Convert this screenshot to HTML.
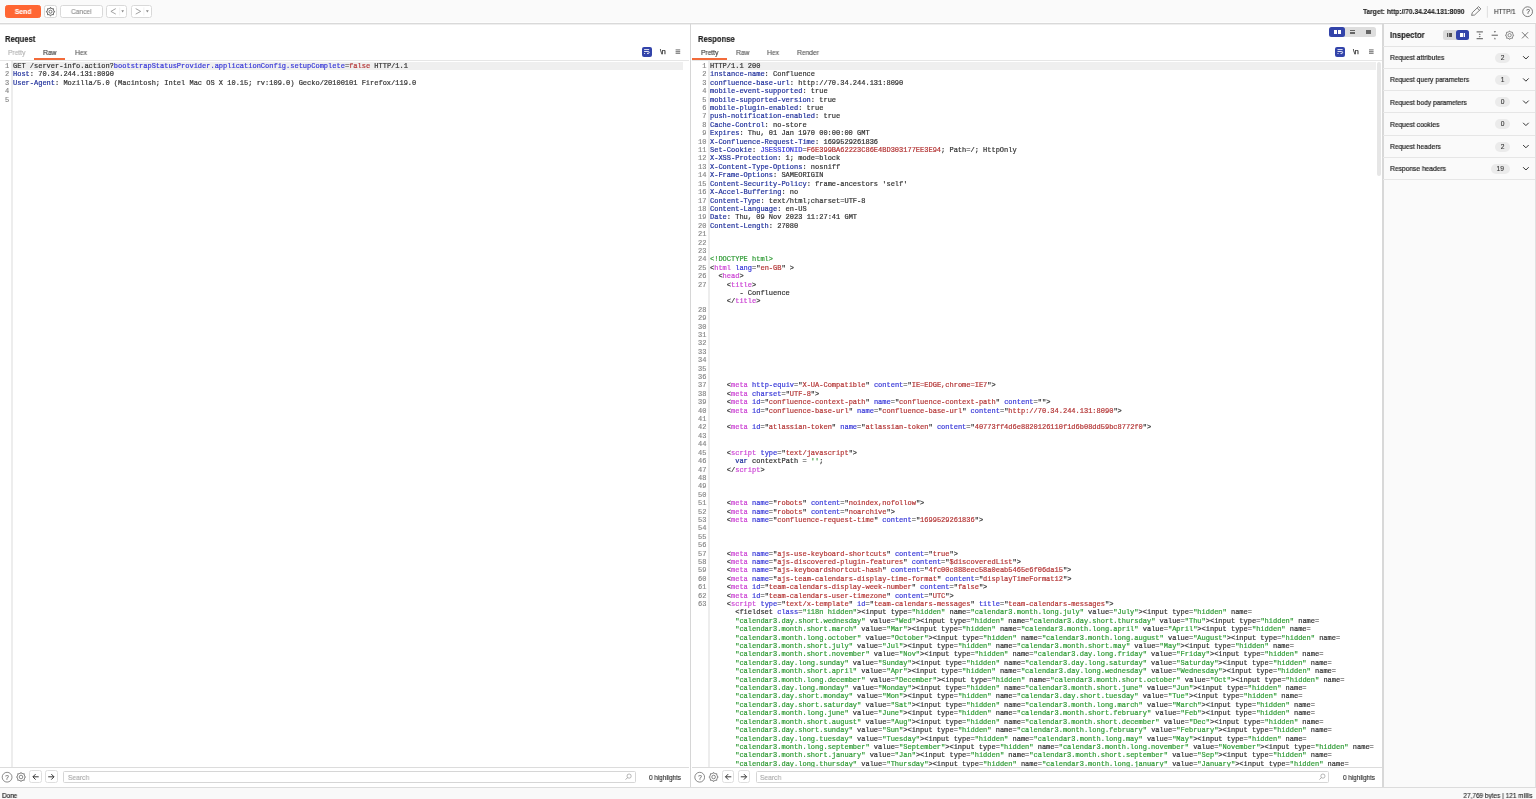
<!DOCTYPE html>
<html><head><meta charset="utf-8">
<style>
*{box-sizing:border-box;margin:0;padding:0}
html,body{width:1536px;height:799px;overflow:hidden;background:#fff;-webkit-font-smoothing:antialiased;font-family:"Liberation Sans",sans-serif;color:#222;position:relative}
.abs{position:absolute}
svg{position:absolute;overflow:visible}
.btn{position:absolute;border:1px solid #d9d9d9;border-radius:2.5px;background:#fff}
.ui{will-change:transform;transform:scaleX(0.935);transform-origin:0 0;-webkit-text-stroke:0.12px currentColor;font-size:7.15px;white-space:nowrap;position:absolute;line-height:9px}
.ttl{will-change:transform;transform:scaleX(0.855);transform-origin:0 0;-webkit-text-stroke:0.15px currentColor;font-size:9px;font-weight:bold;line-height:10px;position:absolute;white-space:nowrap}
.code{will-change:transform;font-family:"Liberation Mono",monospace;font-size:7px;line-height:8.41px;white-space:pre;position:absolute;-webkit-text-stroke:0.2px currentColor;color:#333}
.nums{will-change:transform;font-family:"Liberation Mono",monospace;font-size:7px;line-height:8.41px;white-space:pre;position:absolute;text-align:right;color:#858585;-webkit-text-stroke:0.15px currentColor}
.h{color:#21319c}.a{color:#3838d8}.t{color:#cc44d4}.v{color:#b43636}.g{color:#2f9a35}
.vline{position:absolute;width:1px;background:#e3e3e3}
.hline{position:absolute;height:1px;background:#dedede}
.ii{position:absolute;left:1383px;width:152px;height:22.2px;border-bottom:1px solid #e6e6e6}
.ii .lb{will-change:transform;transform:scaleX(0.935);transform-origin:0 0;-webkit-text-stroke:0.2px currentColor;position:absolute;left:6.5px;top:7.4px;font-size:7.15px;line-height:9px;white-space:nowrap;color:#222}
.ii .bd{will-change:transform;position:absolute;right:25.3px;top:6px;height:9.5px;min-width:15.2px;padding:0 2.5px;-webkit-text-stroke:0.1px currentColor;border-radius:5px;background:#ebebeb;font-size:6.7px;line-height:10.6px;text-align:center;color:#333}
</style></head><body>
<div class="abs" style="left:0;top:0;width:1536px;height:23px;background:#fafafa"></div><div class="abs" style="left:0;top:22px;width:1536px;height:1px;background:#fdfdfd"></div><div class="abs" style="left:0;top:23px;width:1536px;height:1px;background:#d9d9d9"></div><div class="abs" style="left:0;top:24px;width:1536px;height:1px;background:#efefef"></div>
<div class="btn" style="left:5px;top:5.45px;width:36.2px;height:12.6px;background:#ff6633;border-color:#ff6633"></div>
<div class="ui" style="left:5px;top:7.95px;width:36.2px;text-align:center;color:#fff;font-weight:bold;transform-origin:50% 0">Send</div>
<div class="btn" style="left:44.3px;top:5.1px;width:12.5px;height:13.4px"></div>
<svg style="left:0;top:0" width="1" height="1"><circle cx="50.5" cy="11.7" r="3.60" fill="none" stroke="#707070" stroke-width="1.0"/><circle cx="50.50" cy="7.65" r="0.62" fill="#707070"/><circle cx="53.36" cy="8.84" r="0.62" fill="#707070"/><circle cx="54.55" cy="11.70" r="0.62" fill="#707070"/><circle cx="53.36" cy="14.56" r="0.62" fill="#707070"/><circle cx="50.50" cy="15.75" r="0.62" fill="#707070"/><circle cx="47.64" cy="14.56" r="0.62" fill="#707070"/><circle cx="46.45" cy="11.70" r="0.62" fill="#707070"/><circle cx="47.64" cy="8.84" r="0.62" fill="#707070"/><circle cx="50.5" cy="11.7" r="1.53" fill="none" stroke="#707070" stroke-width="1.0"/></svg>
<div class="btn" style="left:60.3px;top:5.1px;width:42.6px;height:13.4px"></div>
<div class="ui" style="left:60.3px;top:7.95px;width:42.6px;text-align:center;color:#8a8a8a;transform-origin:50% 0">Cancel</div>
<div class="btn" style="left:106.2px;top:5.1px;width:21.3px;height:13.4px"></div>
<div class="btn" style="left:131.4px;top:5.1px;width:21.1px;height:13.4px"></div>
<svg style="left:0;top:0" width="1" height="1">
 <path d="M115.8 8.6 L110.9 11.4 L115.8 14.1" fill="none" stroke="#8a8a8a" stroke-width="0.8"/>
 <path d="M119.7 7.5 V15.5" stroke="#e6e6e6" stroke-width="0.6"/>
 <path d="M121.3 10.3 H124 L122.65 12.5 Z" fill="#8a8a8a"/>
 <path d="M135.7 8.6 L140.7 11.4 L135.7 14.1" fill="none" stroke="#8a8a8a" stroke-width="0.8"/>
 <path d="M143.9 7.5 V15.5" stroke="#e6e6e6" stroke-width="0.6"/>
 <path d="M145.9 10.3 H148.8 L147.35 12.5 Z" fill="#8a8a8a"/>
 <!-- pencil -->
 <path d="M471.6 15.4 L472.3 12.6 L478.6 6.6 L480.9 8.9 L474.6 15 Z M477.2 8 L479.5 10.3" transform="translate(1000,0)" fill="none" stroke="#555" stroke-width="0.75" stroke-linejoin="round"/>
 <path d="M1487.4 6 V17.7" stroke="#d8d8d8" stroke-width="0.8"/>
 <circle cx="1527.6" cy="11.7" r="4.9" fill="none" stroke="#555" stroke-width="0.75"/>
</svg>
<div class="ui" style="left:1527.6px;top:0;width:0"><div style="position:absolute;left:-3px;top:7.2px;width:6px;text-align:center;font-size:6.6px;line-height:9px;color:#444">?</div></div>
<div class="ui" style="left:1363px;top:7.95px;font-weight:bold;transform:scaleX(0.927)">Target: http://70.34.244.131:8090</div>
<div class="ui" style="left:1493.8px;top:7.95px;color:#333;transform:scaleX(0.874)">HTTP/1</div>

<!-- request panel -->
<div class="ttl" style="left:5px;top:33.6px">Request</div>
<div class="ui" style="left:7.8px;top:49.14px;color:#b0b0b0">Pretty</div>
<div class="ui" style="left:43.2px;top:49.14px;color:#333">Raw</div>
<div class="ui" style="left:74.5px;top:49.14px;color:#555">Hex</div>
<div class="abs" style="left:34.2px;top:58.3px;width:31.2px;height:1.7px;background:#f26b3a"></div>
<div class="abs" style="left:641.9px;top:47px;width:9.9px;height:9.7px;border-radius:2px;background:#3344aa"></div><svg style="left:0;top:0" width="1" height="1"><path d="M644.10 49.55 H649.20 M644.10 51.5 H648.30 A0.95 0.95 0 0 1 648.30 53.4 H647.80 M644.10 53.5 H645.10" fill="none" stroke="#fff" stroke-width="0.85"/><path d="M646.80 53.4 L648.10 52.5 L648.10 54.3 Z" fill="#fff"/><path d="M675.60 49.75 H680.20 M675.60 51.5 H680.20 M675.60 53.25 H680.20" stroke="#8a8a8a" stroke-width="1.25"/></svg><div class="ui" style="left:660.00px;top:47.4px;font-size:7.2px;color:#333;-webkit-text-stroke:0.25px currentColor;letter-spacing:-0.2px;transform:none">\n</div>
<div class="hline" style="left:0;top:59.8px;width:689px;background:#e6e6e6"></div>
<div class="abs" style="left:12px;top:61.7px;width:670.5px;height:8px;background:#efefef"></div>
<div class="nums" style="left:0;top:62.4px;width:9.3px"><div>1</div><div>2</div><div>3</div><div>4</div><div>5</div></div>
<div class="vline" style="left:10.5px;top:60.5px;height:706.5px;width:2px;background:#ededed"></div>
<div class="code" style="left:13.2px;top:62.4px"><div class=hl>GET /server-info.action?<span class="a">bootstrapStatusProvider.applicationConfig.setupComplete</span>=<span class="v">false</span> HTTP/1.1</div><div><span class="h">Host</span>: 70.34.244.131:8090</div><div><span class="h">User-Agent</span>: Mozilla/5.0 (Macintosh; Intel Mac OS X 10.15; rv:109.0) Gecko/20100101 Firefox/119.0</div><div>&nbsp;</div><div>&nbsp;</div></div>
<div class="hline" style="left:0;top:767px;width:689px;background:#dcdcdc"></div>
<svg style="left:0;top:0" width="1" height="1"><circle cx="7.10" cy="777.2" r="4.9" fill="none" stroke="#666" stroke-width="0.75"/></svg><div class="ui" style="left:4.10px;top:772.6px;width:6px;text-align:center;font-size:6.4px;color:#666">?</div><svg style="left:0;top:0" width="1" height="1"><circle cx="21.0" cy="777.0" r="4.00" fill="none" stroke="#666" stroke-width="0.75"/><circle cx="21.00" cy="772.50" r="0.46" fill="#666"/><circle cx="24.18" cy="773.82" r="0.46" fill="#666"/><circle cx="25.50" cy="777.00" r="0.46" fill="#666"/><circle cx="24.18" cy="780.18" r="0.46" fill="#666"/><circle cx="21.00" cy="781.50" r="0.46" fill="#666"/><circle cx="17.82" cy="780.18" r="0.46" fill="#666"/><circle cx="16.50" cy="777.00" r="0.46" fill="#666"/><circle cx="17.82" cy="773.82" r="0.46" fill="#666"/><circle cx="21.0" cy="777.0" r="1.80" fill="none" stroke="#666" stroke-width="0.75"/></svg><div class="btn" style="left:29.40px;top:770.3px;width:12.3px;height:12.8px;border-color:#dfdfdf"></div><div class="btn" style="left:45.10px;top:770.3px;width:12.6px;height:12.8px;border-color:#dfdfdf"></div><svg style="left:0;top:0" width="1" height="1"><path d="M38.70 776.8 H33.00 M35.60 774.1 L32.90 776.8 L35.60 779.6" fill="none" stroke="#222" stroke-width="0.9"/><path d="M48.20 776.8 H53.90 M51.30 774.1 L54.00 776.8 L51.30 779.6" fill="none" stroke="#222" stroke-width="0.9"/></svg><div class="btn" style="left:63.30px;top:771px;width:572.40px;height:12px;border-color:#d6d6d6;border-radius:1.5px"></div><div class="ui" style="left:67.70px;top:773.55px;color:#a8a8a8">Search</div><svg style="left:0;top:0" width="1" height="1"><circle cx="629.10" cy="776.1" r="2.1" fill="none" stroke="#888" stroke-width="0.6"/><path d="M627.60 777.6 L625.60 779.6" stroke="#888" stroke-width="0.7"/></svg><div class="ui" style="left:648.80px;top:773.55px;color:#222;transform:scaleX(0.884)">0 highlights</div>

<!-- divider -->
<div class="vline" style="left:690px;top:24px;height:763px;width:1.2px;background:#d6d6d6"></div>

<!-- response panel -->
<div class="abs" style="left:1329.2px;top:27.2px;width:46.7px;height:9.6px;border-radius:2.5px;background:#dedede"></div>
<div class="abs" style="left:1329.2px;top:27.2px;width:15.6px;height:9.6px;border-radius:2.5px;background:#3344aa"></div>
<div class="abs" style="left:1333.7px;top:29.9px;width:3.2px;height:4px;background:#fff"></div>
<div class="abs" style="left:1337.6px;top:29.9px;width:3.1px;height:4px;background:#fff"></div>
<div class="abs" style="left:1350.2px;top:29.9px;width:5px;height:1.5px;background:#666"></div>
<div class="abs" style="left:1350.2px;top:32.4px;width:5px;height:1.5px;background:#666"></div>
<div class="abs" style="left:1366px;top:29.9px;width:4.9px;height:4px;background:#666"></div>
<div class="ttl" style="left:697.9px;top:33.6px">Response</div>
<div class="ui" style="left:700.6px;top:49.14px;color:#333">Pretty</div>
<div class="ui" style="left:735.8px;top:49.14px;color:#555">Raw</div>
<div class="ui" style="left:767.1px;top:49.14px;color:#555">Hex</div>
<div class="ui" style="left:797.1px;top:49.14px;color:#555">Render</div>
<div class="abs" style="left:691.9px;top:58.3px;width:35.1px;height:1.7px;background:#f26b3a"></div>
<div class="abs" style="left:1335.3px;top:47px;width:9.9px;height:9.7px;border-radius:2px;background:#3344aa"></div><svg style="left:0;top:0" width="1" height="1"><path d="M1337.50 49.55 H1342.60 M1337.50 51.5 H1341.70 A0.95 0.95 0 0 1 1341.70 53.4 H1341.20 M1337.50 53.5 H1338.50" fill="none" stroke="#fff" stroke-width="0.85"/><path d="M1340.20 53.4 L1341.50 52.5 L1341.50 54.3 Z" fill="#fff"/><path d="M1369.00 49.75 H1373.60 M1369.00 51.5 H1373.60 M1369.00 53.25 H1373.60" stroke="#8a8a8a" stroke-width="1.25"/></svg><div class="ui" style="left:1353.40px;top:47.4px;font-size:7.2px;color:#333;-webkit-text-stroke:0.25px currentColor;letter-spacing:-0.2px;transform:none">\n</div>
<div class="hline" style="left:691.5px;top:59.8px;width:691px;background:#e6e6e6"></div>
<div class="abs" style="left:709px;top:61.7px;width:666.7px;height:8px;background:#efefef"></div>
<div class="nums" style="left:692px;top:62.4px;width:14.4px"><div>1</div><div>2</div><div>3</div><div>4</div><div>5</div><div>6</div><div>7</div><div>8</div><div>9</div><div>10</div><div>11</div><div>12</div><div>13</div><div>14</div><div>15</div><div>16</div><div>17</div><div>18</div><div>19</div><div>20</div><div>21</div><div>22</div><div>23</div><div>24</div><div>25</div><div>26</div><div>27</div><div>&nbsp;</div><div>&nbsp;</div><div>28</div><div>29</div><div>30</div><div>31</div><div>32</div><div>33</div><div>34</div><div>35</div><div>36</div><div>37</div><div>38</div><div>39</div><div>40</div><div>41</div><div>42</div><div>43</div><div>44</div><div>45</div><div>46</div><div>47</div><div>48</div><div>49</div><div>50</div><div>51</div><div>52</div><div>53</div><div>54</div><div>55</div><div>56</div><div>57</div><div>58</div><div>59</div><div>60</div><div>61</div><div>62</div><div>63</div><div>&nbsp;</div><div>&nbsp;</div><div>&nbsp;</div><div>&nbsp;</div><div>&nbsp;</div><div>&nbsp;</div><div>&nbsp;</div><div>&nbsp;</div><div>&nbsp;</div><div>&nbsp;</div><div>&nbsp;</div><div>&nbsp;</div><div>&nbsp;</div><div>&nbsp;</div><div>&nbsp;</div><div>&nbsp;</div><div>&nbsp;</div><div>&nbsp;</div><div>&nbsp;</div></div>
<div class="vline" style="left:707.5px;top:60.5px;height:706.5px;width:2px;background:#ededed"></div>
<div class="code" style="left:710.4px;top:62.4px"><div class=hl>HTTP/1.1 200</div><div><span class="h">instance-name</span>: Confluence</div><div><span class="h">confluence-base-url</span>: http://70.34.244.131:8090</div><div><span class="h">mobile-event-supported</span>: true</div><div><span class="h">mobile-supported-version</span>: true</div><div><span class="h">mobile-plugin-enabled</span>: true</div><div><span class="h">push-notification-enabled</span>: true</div><div><span class="h">Cache-Control</span>: no-store</div><div><span class="h">Expires</span>: Thu, 01 Jan 1970 00:00:00 GMT</div><div><span class="h">X-Confluence-Request-Time</span>: 1699529261836</div><div><span class="h">Set-Cookie</span>: <span class="a">JSESSIONID</span>=<span class="v">F6E399BA62223C86E4BD303177EE3E94</span>; Path=/; HttpOnly</div><div><span class="h">X-XSS-Protection</span>: 1; mode=block</div><div><span class="h">X-Content-Type-Options</span>: nosniff</div><div><span class="h">X-Frame-Options</span>: SAMEORIGIN</div><div><span class="h">Content-Security-Policy</span>: frame-ancestors &#x27;self&#x27;</div><div><span class="h">X-Accel-Buffering</span>: no</div><div><span class="h">Content-Type</span>: text/html;charset=UTF-8</div><div><span class="h">Content-Language</span>: en-US</div><div><span class="h">Date</span>: Thu, 09 Nov 2023 11:27:41 GMT</div><div><span class="h">Content-Length</span>: 27080</div><div>&nbsp;</div><div>&nbsp;</div><div>&nbsp;</div><div><span class="g">&lt;!DOCTYPE html&gt;</span></div><div>&lt;<span class="t">html</span> <span class="a">lang</span>=&quot;<span class="v">en-GB</span>&quot; &gt;</div><div>  &lt;<span class="t">head</span>&gt;</div><div>    &lt;<span class="t">title</span>&gt;</div><div>       - Confluence</div><div>    &lt;/<span class="t">title</span>&gt;</div><div>&nbsp;</div><div>&nbsp;</div><div>&nbsp;</div><div>&nbsp;</div><div>&nbsp;</div><div>&nbsp;</div><div>&nbsp;</div><div>&nbsp;</div><div>&nbsp;</div><div>    &lt;<span class="t">meta</span> <span class="a">http-equiv</span>=&quot;<span class="v">X-UA-Compatible</span>&quot; <span class="a">content</span>=&quot;<span class="v">IE=EDGE,chrome=IE7</span>&quot;&gt;</div><div>    &lt;<span class="t">meta</span> <span class="a">charset</span>=&quot;<span class="v">UTF-8</span>&quot;&gt;</div><div>    &lt;<span class="t">meta</span> <span class="a">id</span>=&quot;<span class="v">confluence-context-path</span>&quot; <span class="a">name</span>=&quot;<span class="v">confluence-context-path</span>&quot; <span class="a">content</span>=&quot;<span class="v"></span>&quot;&gt;</div><div>    &lt;<span class="t">meta</span> <span class="a">id</span>=&quot;<span class="v">confluence-base-url</span>&quot; <span class="a">name</span>=&quot;<span class="v">confluence-base-url</span>&quot; <span class="a">content</span>=&quot;<span class="v">http://70.34.244.131:8090</span>&quot;&gt;</div><div>&nbsp;</div><div>    &lt;<span class="t">meta</span> <span class="a">id</span>=&quot;<span class="v">atlassian-token</span>&quot; <span class="a">name</span>=&quot;<span class="v">atlassian-token</span>&quot; <span class="a">content</span>=&quot;<span class="v">40773ff4d6e8820126110f1d6b08dd59bc8772f0</span>&quot;&gt;</div><div>&nbsp;</div><div>&nbsp;</div><div>    &lt;<span class="t">script</span> <span class="a">type</span>=&quot;<span class="v">text/javascript</span>&quot;&gt;</div><div>      <span class="h">var</span> contextPath = <span class="g">&#x27;&#x27;</span>;</div><div>    &lt;/<span class="t">script</span>&gt;</div><div>&nbsp;</div><div>&nbsp;</div><div>&nbsp;</div><div>    &lt;<span class="t">meta</span> <span class="a">name</span>=&quot;<span class="v">robots</span>&quot; <span class="a">content</span>=&quot;<span class="v">noindex,nofollow</span>&quot;&gt;</div><div>    &lt;<span class="t">meta</span> <span class="a">name</span>=&quot;<span class="v">robots</span>&quot; <span class="a">content</span>=&quot;<span class="v">noarchive</span>&quot;&gt;</div><div>    &lt;<span class="t">meta</span> <span class="a">name</span>=&quot;<span class="v">confluence-request-time</span>&quot; <span class="a">content</span>=&quot;<span class="v">1699529261836</span>&quot;&gt;</div><div>&nbsp;</div><div>&nbsp;</div><div>&nbsp;</div><div>    &lt;<span class="t">meta</span> <span class="a">name</span>=&quot;<span class="v">ajs-use-keyboard-shortcuts</span>&quot; <span class="a">content</span>=&quot;<span class="v">true</span>&quot;&gt;</div><div>    &lt;<span class="t">meta</span> <span class="a">name</span>=&quot;<span class="v">ajs-discovered-plugin-features</span>&quot; <span class="a">content</span>=&quot;<span class="v">$discoveredList</span>&quot;&gt;</div><div>    &lt;<span class="t">meta</span> <span class="a">name</span>=&quot;<span class="v">ajs-keyboardshortcut-hash</span>&quot; <span class="a">content</span>=&quot;<span class="v">4fc00c888eec58a0eab5465e6f06da15</span>&quot;&gt;</div><div>    &lt;<span class="t">meta</span> <span class="a">name</span>=&quot;<span class="v">ajs-team-calendars-display-time-format</span>&quot; <span class="a">content</span>=&quot;<span class="v">displayTimeFormat12</span>&quot;&gt;</div><div>    &lt;<span class="t">meta</span> <span class="a">id</span>=&quot;<span class="v">team-calendars-display-week-number</span>&quot; <span class="a">content</span>=&quot;<span class="v">false</span>&quot;&gt;</div><div>    &lt;<span class="t">meta</span> <span class="a">id</span>=&quot;<span class="v">team-calendars-user-timezone</span>&quot; <span class="a">content</span>=&quot;<span class="v">UTC</span>&quot;&gt;</div><div>    &lt;<span class="t">script</span> <span class="a">type</span>=&quot;<span class="v">text/x-template</span>&quot; <span class="a">id</span>=&quot;<span class="v">team-calendars-messages</span>&quot; <span class="a">title</span>=&quot;<span class="v">team-calendars-messages</span>&quot;&gt;</div><div>      &lt;fieldset <span class="a">class</span>=<span class="g">&quot;i18n hidden&quot;</span>&gt;&lt;input type=<span class="g">&quot;hidden&quot;</span> name=<span class="g">&quot;calendar3.month.long.july&quot;</span> value=<span class="g">&quot;July&quot;</span>&gt;&lt;input type=<span class="g">&quot;hidden&quot;</span> name=</div><div>      <span class="g">&quot;calendar3.day.short.wednesday&quot;</span> value=<span class="g">&quot;Wed&quot;</span>&gt;&lt;input type=<span class="g">&quot;hidden&quot;</span> name=<span class="g">&quot;calendar3.day.short.thursday&quot;</span> value=<span class="g">&quot;Thu&quot;</span>&gt;&lt;input type=<span class="g">&quot;hidden&quot;</span> name=</div><div>      <span class="g">&quot;calendar3.month.short.march&quot;</span> value=<span class="g">&quot;Mar&quot;</span>&gt;&lt;input type=<span class="g">&quot;hidden&quot;</span> name=<span class="g">&quot;calendar3.month.long.april&quot;</span> value=<span class="g">&quot;April&quot;</span>&gt;&lt;input type=<span class="g">&quot;hidden&quot;</span> name=</div><div>      <span class="g">&quot;calendar3.month.long.october&quot;</span> value=<span class="g">&quot;October&quot;</span>&gt;&lt;input type=<span class="g">&quot;hidden&quot;</span> name=<span class="g">&quot;calendar3.month.long.august&quot;</span> value=<span class="g">&quot;August&quot;</span>&gt;&lt;input type=<span class="g">&quot;hidden&quot;</span> name=</div><div>      <span class="g">&quot;calendar3.month.short.july&quot;</span> value=<span class="g">&quot;Jul&quot;</span>&gt;&lt;input type=<span class="g">&quot;hidden&quot;</span> name=<span class="g">&quot;calendar3.month.short.may&quot;</span> value=<span class="g">&quot;May&quot;</span>&gt;&lt;input type=<span class="g">&quot;hidden&quot;</span> name=</div><div>      <span class="g">&quot;calendar3.month.short.november&quot;</span> value=<span class="g">&quot;Nov&quot;</span>&gt;&lt;input type=<span class="g">&quot;hidden&quot;</span> name=<span class="g">&quot;calendar3.day.long.friday&quot;</span> value=<span class="g">&quot;Friday&quot;</span>&gt;&lt;input type=<span class="g">&quot;hidden&quot;</span> name=</div><div>      <span class="g">&quot;calendar3.day.long.sunday&quot;</span> value=<span class="g">&quot;Sunday&quot;</span>&gt;&lt;input type=<span class="g">&quot;hidden&quot;</span> name=<span class="g">&quot;calendar3.day.long.saturday&quot;</span> value=<span class="g">&quot;Saturday&quot;</span>&gt;&lt;input type=<span class="g">&quot;hidden&quot;</span> name=</div><div>      <span class="g">&quot;calendar3.month.short.april&quot;</span> value=<span class="g">&quot;Apr&quot;</span>&gt;&lt;input type=<span class="g">&quot;hidden&quot;</span> name=<span class="g">&quot;calendar3.day.long.wednesday&quot;</span> value=<span class="g">&quot;Wednesday&quot;</span>&gt;&lt;input type=<span class="g">&quot;hidden&quot;</span> name=</div><div>      <span class="g">&quot;calendar3.month.long.december&quot;</span> value=<span class="g">&quot;December&quot;</span>&gt;&lt;input type=<span class="g">&quot;hidden&quot;</span> name=<span class="g">&quot;calendar3.month.short.october&quot;</span> value=<span class="g">&quot;Oct&quot;</span>&gt;&lt;input type=<span class="g">&quot;hidden&quot;</span> name=</div><div>      <span class="g">&quot;calendar3.day.long.monday&quot;</span> value=<span class="g">&quot;Monday&quot;</span>&gt;&lt;input type=<span class="g">&quot;hidden&quot;</span> name=<span class="g">&quot;calendar3.month.short.june&quot;</span> value=<span class="g">&quot;Jun&quot;</span>&gt;&lt;input type=<span class="g">&quot;hidden&quot;</span> name=</div><div>      <span class="g">&quot;calendar3.day.short.monday&quot;</span> value=<span class="g">&quot;Mon&quot;</span>&gt;&lt;input type=<span class="g">&quot;hidden&quot;</span> name=<span class="g">&quot;calendar3.day.short.tuesday&quot;</span> value=<span class="g">&quot;Tue&quot;</span>&gt;&lt;input type=<span class="g">&quot;hidden&quot;</span> name=</div><div>      <span class="g">&quot;calendar3.day.short.saturday&quot;</span> value=<span class="g">&quot;Sat&quot;</span>&gt;&lt;input type=<span class="g">&quot;hidden&quot;</span> name=<span class="g">&quot;calendar3.month.long.march&quot;</span> value=<span class="g">&quot;March&quot;</span>&gt;&lt;input type=<span class="g">&quot;hidden&quot;</span> name=</div><div>      <span class="g">&quot;calendar3.month.long.june&quot;</span> value=<span class="g">&quot;June&quot;</span>&gt;&lt;input type=<span class="g">&quot;hidden&quot;</span> name=<span class="g">&quot;calendar3.month.short.february&quot;</span> value=<span class="g">&quot;Feb&quot;</span>&gt;&lt;input type=<span class="g">&quot;hidden&quot;</span> name=</div><div>      <span class="g">&quot;calendar3.month.short.august&quot;</span> value=<span class="g">&quot;Aug&quot;</span>&gt;&lt;input type=<span class="g">&quot;hidden&quot;</span> name=<span class="g">&quot;calendar3.month.short.december&quot;</span> value=<span class="g">&quot;Dec&quot;</span>&gt;&lt;input type=<span class="g">&quot;hidden&quot;</span> name=</div><div>      <span class="g">&quot;calendar3.day.short.sunday&quot;</span> value=<span class="g">&quot;Sun&quot;</span>&gt;&lt;input type=<span class="g">&quot;hidden&quot;</span> name=<span class="g">&quot;calendar3.month.long.february&quot;</span> value=<span class="g">&quot;February&quot;</span>&gt;&lt;input type=<span class="g">&quot;hidden&quot;</span> name=</div><div>      <span class="g">&quot;calendar3.day.long.tuesday&quot;</span> value=<span class="g">&quot;Tuesday&quot;</span>&gt;&lt;input type=<span class="g">&quot;hidden&quot;</span> name=<span class="g">&quot;calendar3.month.long.may&quot;</span> value=<span class="g">&quot;May&quot;</span>&gt;&lt;input type=<span class="g">&quot;hidden&quot;</span> name=</div><div>      <span class="g">&quot;calendar3.month.long.september&quot;</span> value=<span class="g">&quot;September&quot;</span>&gt;&lt;input type=<span class="g">&quot;hidden&quot;</span> name=<span class="g">&quot;calendar3.month.long.november&quot;</span> value=<span class="g">&quot;November&quot;</span>&gt;&lt;input type=<span class="g">&quot;hidden&quot;</span> name=</div><div>      <span class="g">&quot;calendar3.month.short.january&quot;</span> value=<span class="g">&quot;Jan&quot;</span>&gt;&lt;input type=<span class="g">&quot;hidden&quot;</span> name=<span class="g">&quot;calendar3.month.short.september&quot;</span> value=<span class="g">&quot;Sep&quot;</span>&gt;&lt;input type=<span class="g">&quot;hidden&quot;</span> name=</div><div>      <span class="g">&quot;calendar3.day.long.thursday&quot;</span> value=<span class="g">&quot;Thursday&quot;</span>&gt;&lt;input type=<span class="g">&quot;hidden&quot;</span> name=<span class="g">&quot;calendar3.month.long.january&quot;</span> value=<span class="g">&quot;January&quot;</span>&gt;&lt;input type=<span class="g">&quot;hidden&quot;</span> name=</div></div>
<div class="abs" style="left:1377.2px;top:61.7px;width:3.5px;height:114px;border-radius:2px;background:#e6e6e6"></div>
<div class="hline" style="left:691.5px;top:767px;width:691px;background:#dcdcdc"></div>
<svg style="left:0;top:0" width="1" height="1"><circle cx="699.70" cy="777.2" r="4.9" fill="none" stroke="#666" stroke-width="0.75"/></svg><div class="ui" style="left:696.70px;top:772.6px;width:6px;text-align:center;font-size:6.4px;color:#666">?</div><svg style="left:0;top:0" width="1" height="1"><circle cx="713.6" cy="777.0" r="4.00" fill="none" stroke="#666" stroke-width="0.75"/><circle cx="713.60" cy="772.50" r="0.46" fill="#666"/><circle cx="716.78" cy="773.82" r="0.46" fill="#666"/><circle cx="718.10" cy="777.00" r="0.46" fill="#666"/><circle cx="716.78" cy="780.18" r="0.46" fill="#666"/><circle cx="713.60" cy="781.50" r="0.46" fill="#666"/><circle cx="710.42" cy="780.18" r="0.46" fill="#666"/><circle cx="709.10" cy="777.00" r="0.46" fill="#666"/><circle cx="710.42" cy="773.82" r="0.46" fill="#666"/><circle cx="713.6" cy="777.0" r="1.80" fill="none" stroke="#666" stroke-width="0.75"/></svg><div class="btn" style="left:722.00px;top:770.3px;width:12.3px;height:12.8px;border-color:#dfdfdf"></div><div class="btn" style="left:737.70px;top:770.3px;width:12.6px;height:12.8px;border-color:#dfdfdf"></div><svg style="left:0;top:0" width="1" height="1"><path d="M731.30 776.8 H725.60 M728.20 774.1 L725.50 776.8 L728.20 779.6" fill="none" stroke="#222" stroke-width="0.9"/><path d="M740.80 776.8 H746.50 M743.90 774.1 L746.60 776.8 L743.90 779.6" fill="none" stroke="#222" stroke-width="0.9"/></svg><div class="btn" style="left:755.90px;top:771px;width:573.60px;height:12px;border-color:#d6d6d6;border-radius:1.5px"></div><div class="ui" style="left:760.30px;top:773.55px;color:#a8a8a8">Search</div><svg style="left:0;top:0" width="1" height="1"><circle cx="1322.90" cy="776.1" r="2.1" fill="none" stroke="#888" stroke-width="0.6"/><path d="M1321.40 777.6 L1319.40 779.6" stroke="#888" stroke-width="0.7"/></svg><div class="ui" style="left:1342.60px;top:773.55px;color:#222;transform:scaleX(0.884)">0 highlights</div>

<!-- inspector -->
<div class="abs" style="left:1382px;top:24px;width:154px;height:763px;background:#fafafa;border-left:2px solid #d8d8d8;border-right:1px solid #e0e0e0"></div>
<div class="ttl" style="left:1389.7px;top:29.8px">Inspector</div>
<div class="abs" style="left:1442.8px;top:30px;width:26.7px;height:9.8px;border-radius:2.5px;background:#dcdcdc"></div>
<div class="abs" style="left:1455.9px;top:30px;width:13.6px;height:9.8px;border-radius:2.5px;background:#3344aa"></div>
<div class="abs" style="left:1446.7px;top:33.1px;width:5.3px;height:3.6px;background:#555"></div>
<div class="abs" style="left:1448.2px;top:33.1px;width:0.6px;height:3.6px;background:#bbb"></div>
<div class="abs" style="left:1460px;top:33.1px;width:5.3px;height:3.6px;background:#fff"></div>
<div class="abs" style="left:1463.2px;top:33.1px;width:0.7px;height:3.6px;background:#7a84c4"></div>
<svg style="left:0;top:0" width="1" height="1">
 <path d="M1476.6 31.95 H1482.9 M1476.6 38.6 H1482.9" stroke="#777" stroke-width="1.2"/>
 <path d="M1478.7 34.9 L1479.75 33.3 L1480.8 34.9 Z M1478.7 35.9 L1479.75 37.4 L1480.8 35.9 Z" fill="#777"/>
 <path d="M1491.6 35.25 H1497.9" stroke="#777" stroke-width="1.2"/>
 <path d="M1493.8 31.1 L1496 31.1 L1494.9 32.9 Z M1493.8 39.2 L1496 39.2 L1494.9 37.5 Z" fill="#777"/>
 <path d="M1522 32.2 L1528.1 38.4 M1528.1 32.2 L1522 38.4" stroke="#555" stroke-width="0.8"/>
</svg>
<svg style="left:0;top:0" width="1" height="1"><circle cx="1509.6" cy="35.2" r="3.68" fill="none" stroke="#6a6a6a" stroke-width="0.75"/><circle cx="1509.60" cy="31.06" r="0.46" fill="#6a6a6a"/><circle cx="1512.53" cy="32.27" r="0.46" fill="#6a6a6a"/><circle cx="1513.74" cy="35.20" r="0.46" fill="#6a6a6a"/><circle cx="1512.53" cy="38.13" r="0.46" fill="#6a6a6a"/><circle cx="1509.60" cy="39.34" r="0.46" fill="#6a6a6a"/><circle cx="1506.67" cy="38.13" r="0.46" fill="#6a6a6a"/><circle cx="1505.46" cy="35.20" r="0.46" fill="#6a6a6a"/><circle cx="1506.67" cy="32.27" r="0.46" fill="#6a6a6a"/><circle cx="1509.6" cy="35.2" r="1.66" fill="none" stroke="#6a6a6a" stroke-width="0.75"/></svg>
<div class="hline" style="left:1383px;top:46.3px;width:152px;background:#e4e4e4"></div>
<div class="ii" style="top:46.80px"><div class="lb">Request attributes</div><div class="bd" style="width:15.2px">2</div></div><svg style="left:0;top:0" width="1" height="1"><path d="M1523.1 56.20 L1525.9 59.00 L1528.7 56.20" fill="none" stroke="#333" stroke-width="1"/></svg><div class="ii" style="top:69.00px"><div class="lb">Request query parameters</div><div class="bd" style="width:15.2px">1</div></div><svg style="left:0;top:0" width="1" height="1"><path d="M1523.1 78.40 L1525.9 81.20 L1528.7 78.40" fill="none" stroke="#333" stroke-width="1"/></svg><div class="ii" style="top:91.20px"><div class="lb">Request body parameters</div><div class="bd" style="width:15.2px">0</div></div><svg style="left:0;top:0" width="1" height="1"><path d="M1523.1 100.60 L1525.9 103.40 L1528.7 100.60" fill="none" stroke="#333" stroke-width="1"/></svg><div class="ii" style="top:113.40px"><div class="lb">Request cookies</div><div class="bd" style="width:15.2px">0</div></div><svg style="left:0;top:0" width="1" height="1"><path d="M1523.1 122.80 L1525.9 125.60 L1528.7 122.80" fill="none" stroke="#333" stroke-width="1"/></svg><div class="ii" style="top:135.60px"><div class="lb">Request headers</div><div class="bd" style="width:15.2px">2</div></div><svg style="left:0;top:0" width="1" height="1"><path d="M1523.1 145.00 L1525.9 147.80 L1528.7 145.00" fill="none" stroke="#333" stroke-width="1"/></svg><div class="ii" style="top:157.80px"><div class="lb">Response headers</div><div class="bd" style="width:18.6px">19</div></div><svg style="left:0;top:0" width="1" height="1"><path d="M1523.1 167.20 L1525.9 170.00 L1528.7 167.20" fill="none" stroke="#333" stroke-width="1"/></svg>

<!-- bottom -->
<div class="hline" style="left:0;top:787px;width:1536px;background:#dcdcdc"></div>
<div class="abs" style="left:0;top:788px;width:1536px;height:11px;background:#f9f9f9"></div>
<div class="ui" style="left:1.95px;top:791.5px;transform:scaleX(0.895);-webkit-text-stroke:0.2px currentColor">Done</div>
<div class="ui" style="right:3.5px;top:791.5px;transform:scaleX(0.903);transform-origin:100% 0">27,769 bytes | 121 millis</div>
</body></html>
